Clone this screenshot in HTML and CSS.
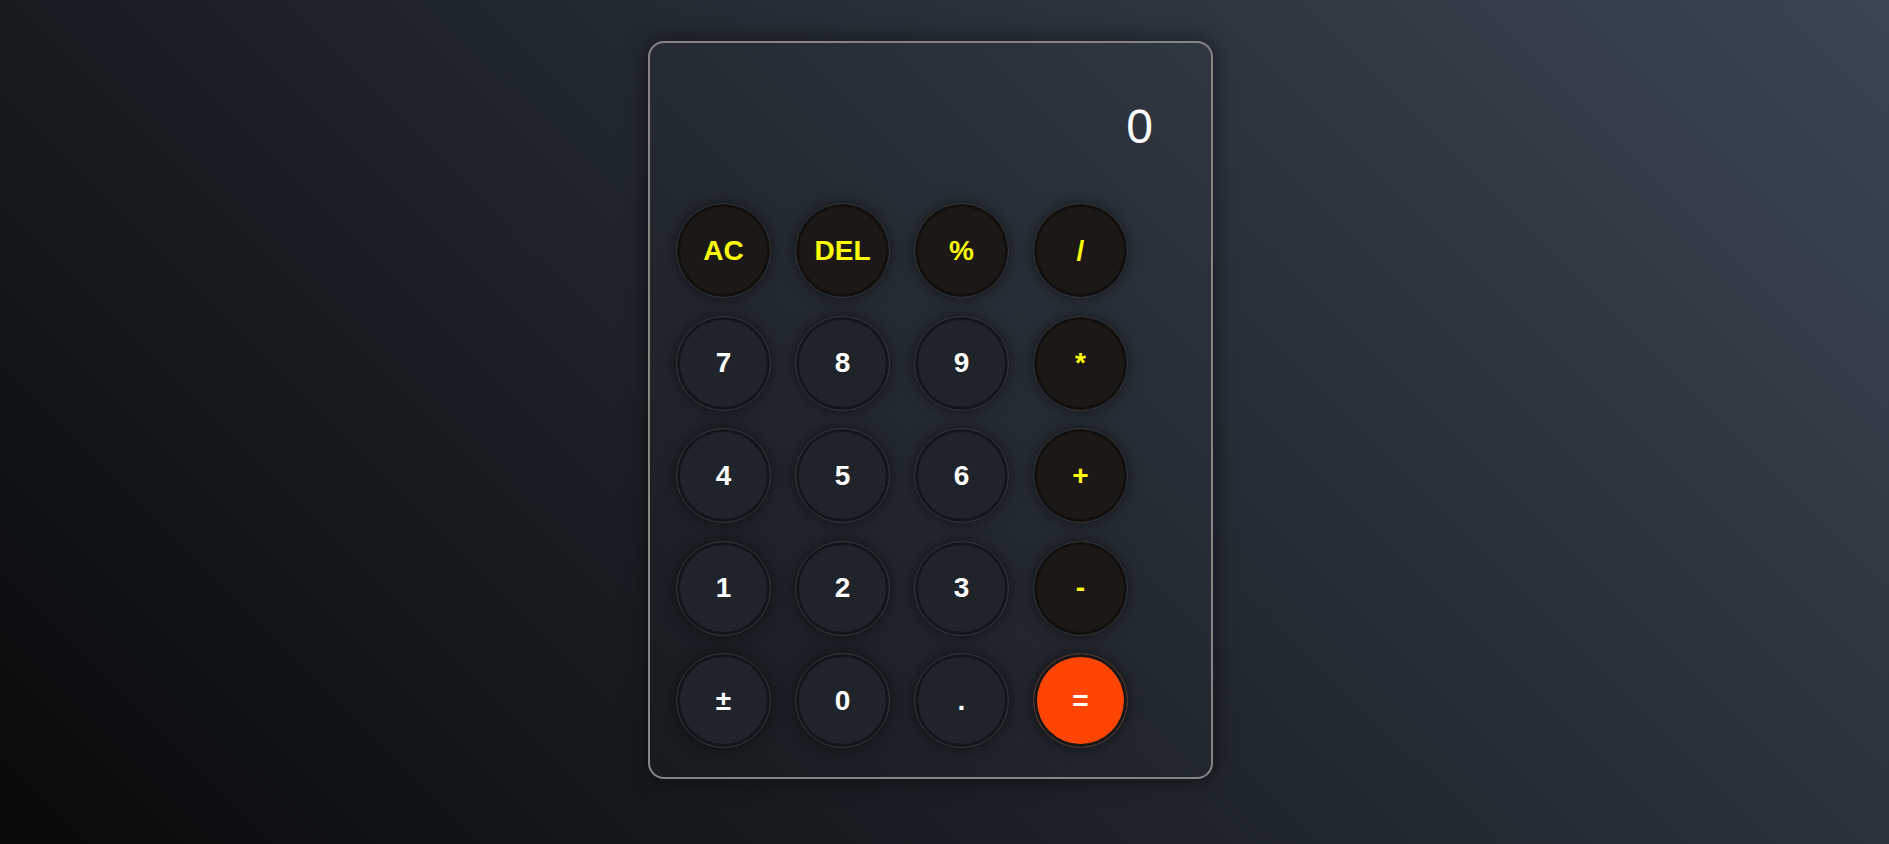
FILE: index.html
```html
<!DOCTYPE html>
<html lang="en">
<head>
<meta charset="utf-8">
<title>Calculator</title>
<link rel="stylesheet" href="styles.css">
</head>
<body>
<div class="page">
  <div class="calculator">
    <div class="display">0</div>
    <div class="keypad">
      <button class="key op">AC</button>
      <button class="key op">DEL</button>
      <button class="key op">%</button>
      <button class="key op">/</button>
      <button class="key num">7</button>
      <button class="key num">8</button>
      <button class="key num">9</button>
      <button class="key op">*</button>
      <button class="key num">4</button>
      <button class="key num">5</button>
      <button class="key num">6</button>
      <button class="key op">+</button>
      <button class="key num">1</button>
      <button class="key num">2</button>
      <button class="key num">3</button>
      <button class="key op">-</button>
      <button class="key num">±</button>
      <button class="key num">0</button>
      <button class="key num">.</button>
      <button class="key equal">=</button>
    </div>
  </div>
</div>
</body>
</html>
```

FILE: styles.css
```css
* { box-sizing: border-box; }

html, body {
  margin: 0;
  height: 100%;
}

body {
  background: linear-gradient(45deg, #08090a 0%, #3b4553 100%);
  font-family: "Liberation Sans", Arial, sans-serif;
  overflow: hidden;
}

.page {
  display: flex;
  justify-content: center;
  align-items: flex-start;
  padding-top: 41px;
  padding-right: 28px;
}

.calculator {
  width: 565px;
  height: 738px;
  border: 2px solid #858585;
  border-radius: 16px;
  background: rgba(255, 255, 255, 0.012);
  box-shadow: 0 0 22px rgba(0, 0, 0, 0.55);
  display: flex;
  flex-direction: column;
}

.display {
  padding: 56px 58px 0 0;
  height: 160px;
  font-size: 48px;
  line-height: 56px;
  color: #ffffff;
  text-align: right;
}

.keypad {
  display: grid;
  grid-template-columns: repeat(4, 95px);
  grid-auto-rows: 95px;
  column-gap: 24px;
  row-gap: 17.5px;
  padding-left: 26px;
}

.key {
  width: 95px;
  height: 95px;
  border-radius: 50%;
  border: 1px solid #34363a;
  font-family: "Liberation Sans", Arial, sans-serif;
  font-size: 28px;
  font-weight: bold;
  padding: 0;
  display: flex;
  align-items: center;
  justify-content: center;
  box-shadow: inset 0 0 0 3px rgba(10, 11, 13, 0.55), 0 0 14px rgba(0, 0, 0, 0.5);
  cursor: pointer;
}

.num {
  background: #1f232a;
  color: #ffffff;
}

.op {
  background: #1c1816;
  color: #ffff00;
}

.equal {
  background: #ff4500;
  color: #ffffff;
  box-shadow: inset 0 0 0 3px #16171a, 0 0 14px rgba(0, 0, 0, 0.5);
}
```
